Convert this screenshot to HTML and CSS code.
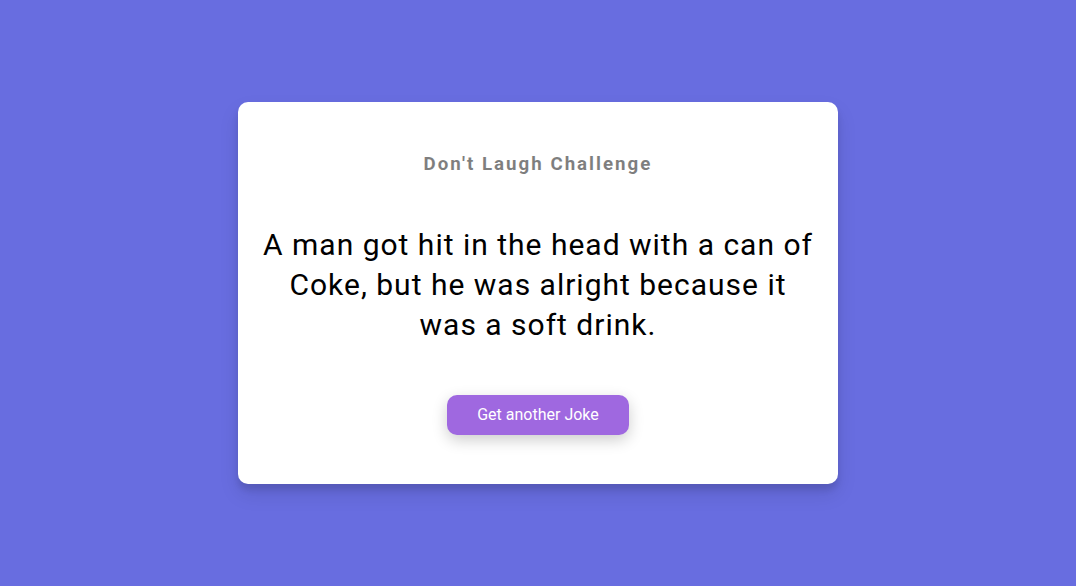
FILE: index.html
```html
<!DOCTYPE html>
<html lang="en">
<head>
<meta charset="UTF-8">
<title>Dad Jokes</title>
<link rel="stylesheet" href="styles.css">
</head>
<body>
  <div class="container">
    <h3 class="title">Don't Laugh Challenge</h3>
    <div class="joke">A man got hit in the head with a can of Coke, but he was alright because it was a soft drink.</div>
    <button class="btn">Get another Joke</button>
  </div>
</body>
</html>
```
FILE: styles.css
```css
* { box-sizing: border-box; }
body {
  background-color: #686de0;
  font-family: Roboto, "Liberation Sans", sans-serif;
  display: flex;
  flex-direction: column;
  align-items: center;
  justify-content: center;
  height: 100vh;
  overflow: hidden;
  margin: 0;
  padding: 20px;
}
.container {
  background-color: #fff;
  border-radius: 10px;
  box-shadow: 0 10px 20px rgba(0, 0, 0, 0.1), 0 6px 6px rgba(0, 0, 0, 0.1);
  padding: 51px 20px 49px;
  text-align: center;
  width: 600px;
  max-width: 100%;
}
.title {
  margin: 0;
  opacity: 0.5;
  letter-spacing: 2px;
  font-size: 18.72px;
  font-weight: bold;
}
.joke {
  font-size: 30px;
  letter-spacing: 1px;
  line-height: 40px;
  margin: 50px auto;
  max-width: 600px;
}
.btn {
  background-color: #9f68e0;
  color: #fff;
  border: 0;
  border-radius: 10px;
  box-shadow: 0 5px 15px rgba(0, 0, 0, 0.2);
  padding: 10px 30px;
  line-height: 20px;
  font-family: inherit;
  font-size: 16px;
  cursor: pointer;
}
```
